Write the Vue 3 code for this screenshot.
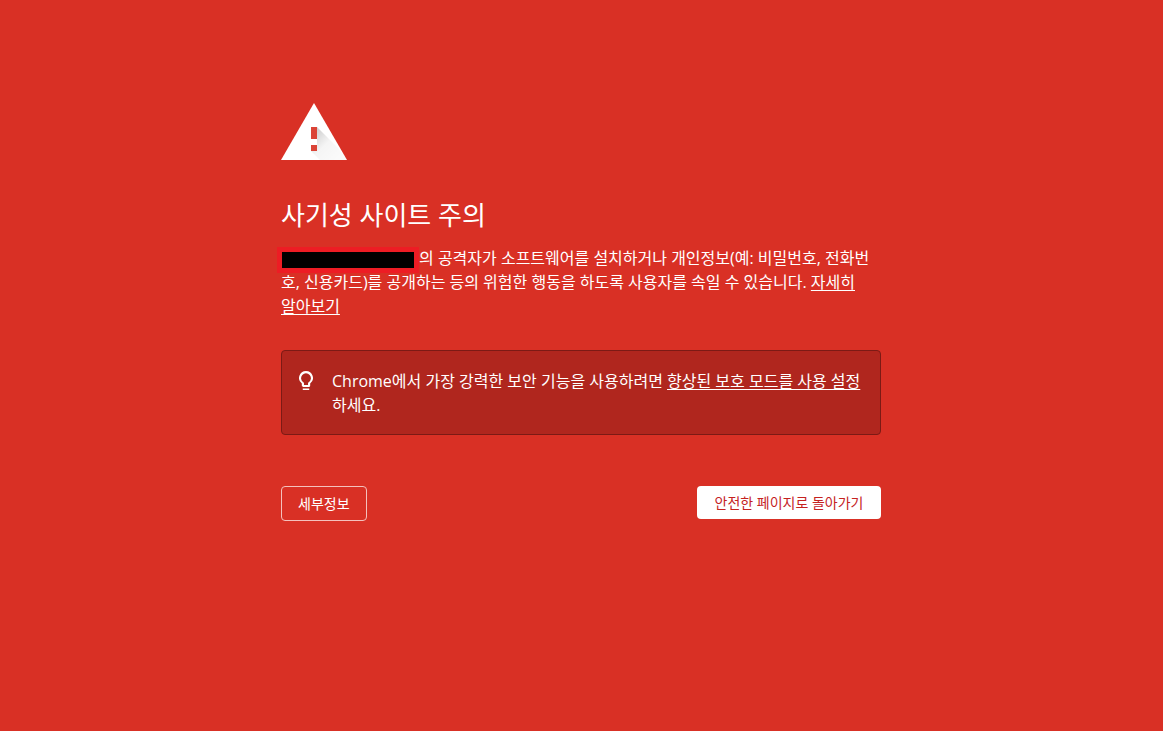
<script setup>
const goBack = () => window.history.back()
</script>

<template>
  <main class="interstitial">
    <svg class="warning" viewBox="0 0 66 57" aria-hidden="true">
      <defs>
        <linearGradient id="shade" x1="33" y1="27" x2="59" y2="53" gradientUnits="userSpaceOnUse">
          <stop offset="0" stop-color="#000" stop-opacity=".2" />
          <stop offset=".5" stop-color="#000" stop-opacity=".04" />
          <stop offset="1" stop-color="#000" stop-opacity=".02" />
        </linearGradient>
      </defs>
      <path fill="#fff" d="M33 0 66 57H0z" />
      <path fill="url(#shade)" d="M36 24 54.500 42.500 57 45 66 57H39L30 48V42h6z" />
      <path fill="#db4437" d="M30 24h6v12h-6zM30 42h6v6h-6z" />
    </svg>

    <h1>사기성 사이트 주의</h1>
    <p class="message">
      <span class="redacted"></span>의 공격자가 소프트웨어를 설치하거나 개인정보(예: 비밀번호, 전화번<br>호, 신용카드)를 공개하는 등의 위험한 행동을 하도록 사용자를 속일 수 있습니다. <a href="#learn">자세히<br>알아보기</a>
    </p>

    <section class="promo">
      <svg class="bulb" viewBox="4.5 1.5 15 20.5" aria-hidden="true">
        <path fill="#fff" d="M12 1.5a7.5 7.5 0 0 0-4.5 13.5V17.5c0 .8.6 1.3 1.3 1.3h6.4c.7 0 1.3-.5 1.3-1.3V15A7.5 7.5 0 0 0 12 1.5zm3 12.2-.8.6v2.4H9.800v-2.400l-.8-.6a5.300 5.300 0 1 1 6 0zM8.500 20.300h7v1.700h-7z" />
      </svg>
      <p>Chrome에서 가장 강력한 보안 기능을 사용하려면 <a href="#enhanced">향상된 보호 모드를 사용 설정</a><br>하세요.</p>
    </section>

    <div class="actions">
      <button class="details" type="button">세부정보</button>
      <button class="safe" type="button" @click="goBack">안전한 페이지로 돌아가기</button>
    </div>
  </main>
</template>

<style>
body {
  margin: 0;
  background: #d93025;
}
</style>

<style scoped>
.interstitial {
  box-sizing: border-box;
  max-width: 601px;
  margin: 0 auto;
  padding: 103px 1px 0 0;
  color: #fff;
  font-family: "Open Sans", "Noto Sans CJK KR", sans-serif;
  font-size: 16px;
  line-height: 24px;
}

.warning {
  display: block;
  width: 66px;
  height: 57px;
}

h1 {
  margin: 39px 0 15px;
  font-size: 26px;
  font-weight: 400;
  line-height: 32px;
}

p {
  margin: 0;
}

a {
  color: inherit;
  text-decoration: underline;
  text-underline-offset: 2px;
  text-decoration-thickness: 1px;
  text-decoration-skip-ink: none;
}

.redacted {
  display: inline-block;
  width: 132px;
  height: 16px;
  margin: 0 5px 0 1px;
  background: #000;
  box-shadow: 0 0 0 5px #ed1c24;
  vertical-align: -4px;
}

.promo {
  display: flex;
  gap: 19px;
  margin-top: 32px;
  padding: 18px 17px 17px;
  border: 1px solid #7c1a15;
  border-radius: 4px;
  background: #b0261e;
}

.promo p {
  flex: 1;
  white-space: nowrap;
}

.bulb {
  flex: none;
  width: 14px;
  height: 19px;
  margin-top: 2px;
}

.actions {
  display: flex;
  align-items: flex-start;
  justify-content: space-between;
  margin-top: 51px;
}

button {
  box-sizing: border-box;
  padding: 0 16px;
  border-radius: 4px;
  font: inherit;
  font-size: 14px;
  cursor: pointer;
}

.details {
  height: 35px;
  border: 1px solid #f4c1bd;
  background: transparent;
  color: #fff;
}

.safe {
  min-width: 184px;
  height: 33px;
  border: 0;
  background: #fff;
  color: #c5221f;
}
</style>
